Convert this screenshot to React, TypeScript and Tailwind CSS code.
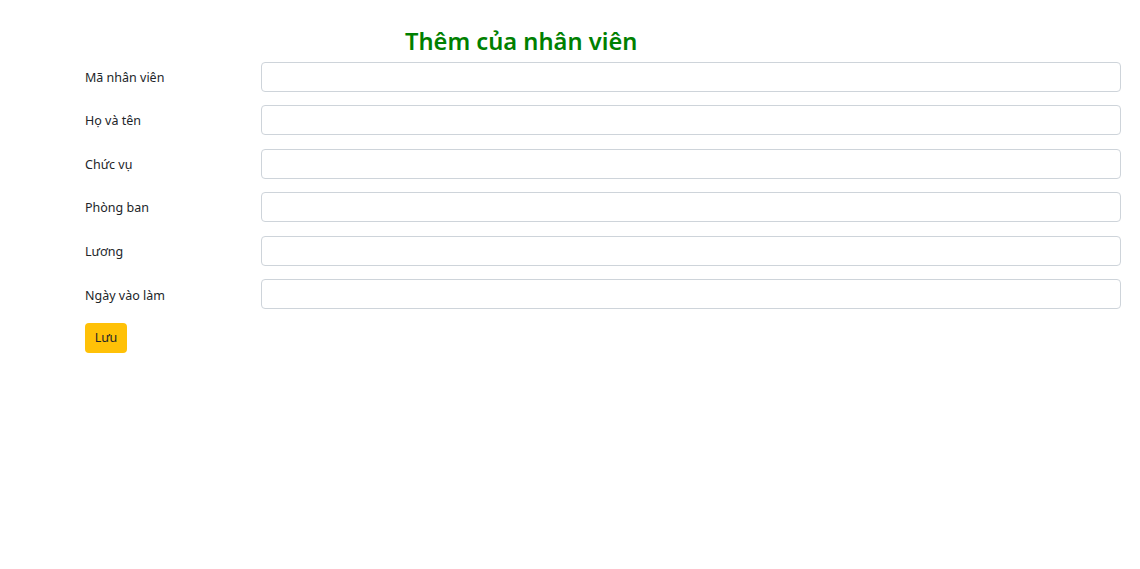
export default function App() {
  const fields = ["Mã nhân viên", "Họ và tên", "Chức vụ", "Phòng ban", "Lương", "Ngày vào làm"];
  return (
    <div className="w-[1140px] h-[569px] bg-white pl-[85px] pr-[19px] pt-[27px] text-[#212529]" style={{ fontFamily: '"Noto Sans", "Open Sans", sans-serif' }}>
      <h2 className="ml-[320px] text-[23.7px] leading-[29px] font-semibold text-[#008000] mb-[5px]">Thêm của nhân viên</h2>
      {fields.map((f) => (
        <div key={f} className="flex items-center h-[31px] mb-[12.6px]">
          <label className="w-[176px] text-[12.5px] pt-[3px]">{f}</label>
          <input className="flex-1 h-[30px] border border-[#ced4da] rounded-[4px]" />
        </div>
      ))}
      <button className="h-[30px] w-[42px] pt-[2px] bg-[#ffc107] rounded-[4px] text-[12.5px] text-[#212529]">Lưu</button>
    </div>
  );
}
